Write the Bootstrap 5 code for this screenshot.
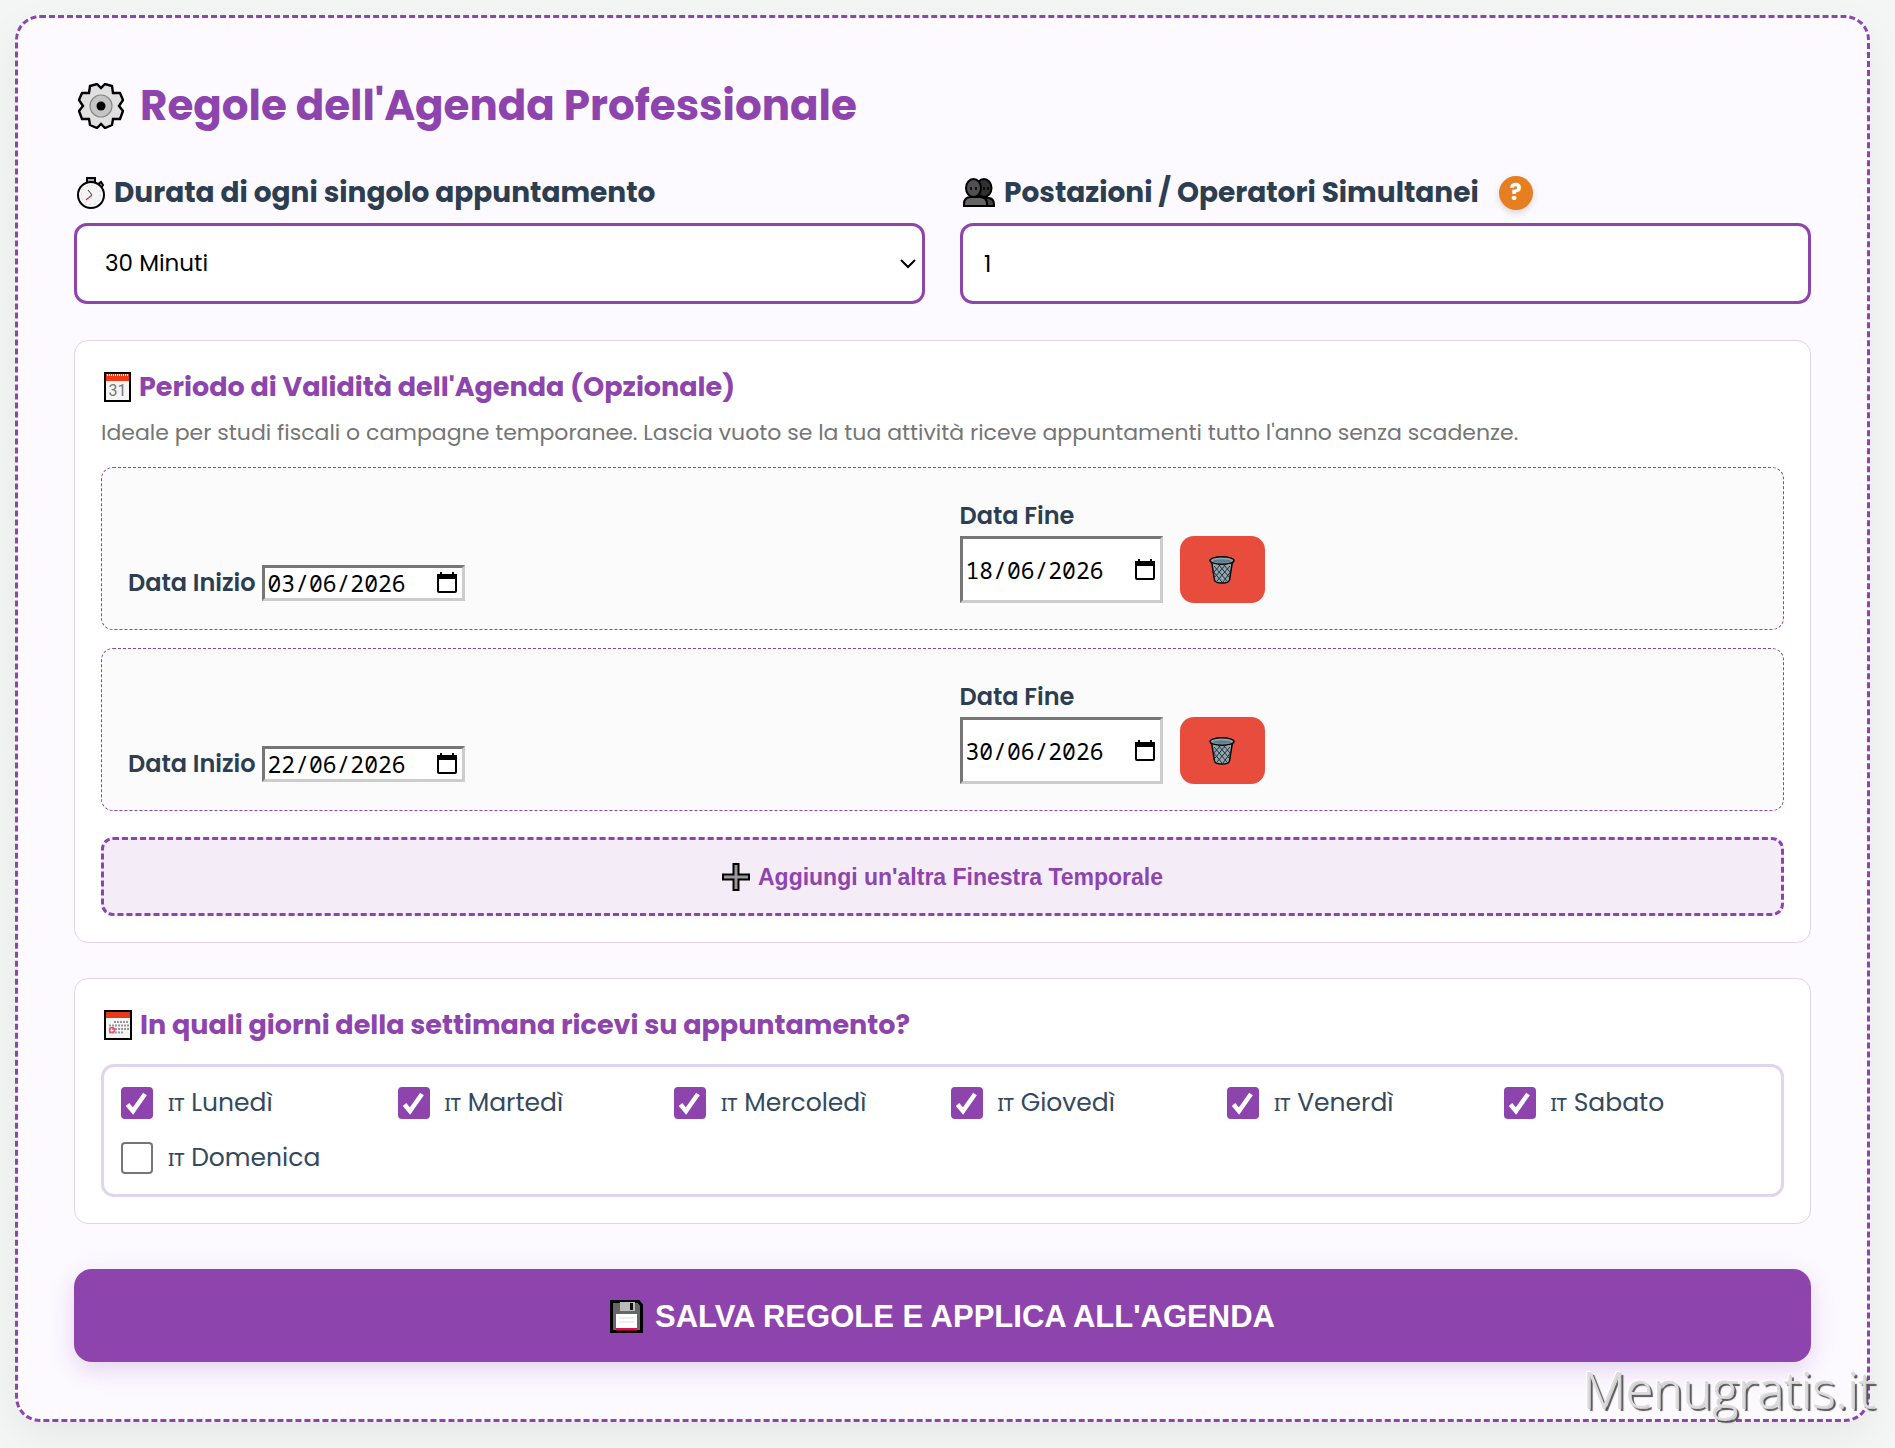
<!DOCTYPE html>
<html lang="it">
<head>
<meta charset="utf-8">
<meta name="viewport" content="width=device-width, initial-scale=1">
<title>Regole dell'Agenda Professionale</title>
<link href="https://cdn.jsdelivr.net/npm/bootstrap@5.3.0/dist/css/bootstrap.min.css" rel="stylesheet">
<style>
:root{--viola:#8e44ad;--ink:#2c3e50}
body{background:#f4f6f6;font-family:Poppins,Inter,"Open Sans",sans-serif;color:var(--ink);padding:15px 25px 26px 15px}
svg{display:block;flex:none}
.agenda{position:relative;background:#fcf9ff;border:3px dashed var(--viola);border-radius:25px;padding:56px 56px 57px;box-shadow:0 14px 40px rgba(0,0,0,.06)}
.agenda h1{font-size:42px;line-height:64px;font-weight:700;color:var(--viola);gap:16px;margin:0 0 35px;padding-left:4px}
.fields{--bs-gutter-x:35px;margin-bottom:36px}
.field-label{font-size:28px;line-height:36px;font-weight:700;gap:8px;height:40px;margin-bottom:10px;padding-left:2px}
.field-box,.field-box:focus{height:81px;border:3px solid var(--viola);border-radius:13px;background-color:#fff;color:#000;font-size:23px;padding:0 21px}
.form-select.field-box{padding-left:28px;background-image:url("data:image/svg+xml,%3Csvg xmlns='http://www.w3.org/2000/svg' viewBox='0 0 16 10'%3E%3Cpath d='M1 1l7 7 7-7' fill='none' stroke='%23000' stroke-width='2'/%3E%3C/svg%3E");background-size:16px 10px;background-position:right 6px center}
.help{width:34px;height:34px;border:0;border-radius:50%;background:#e67e22;color:#fff;font-size:22px;line-height:34px;font-weight:700;padding:0;margin-left:12px;box-shadow:0 3px 6px rgba(0,0,0,.15)}
.panel{background:#fff;border:1px solid #e0d4ea;border-radius:14px;padding:26px}
.panel+.panel{margin-top:35px}
.panel h2{font-size:27px;line-height:40px;font-weight:700;color:var(--viola);gap:8px;margin:0;padding-left:3px}
.hint{font-size:22px;line-height:32px;color:#757575;margin:10px 0 18px}
.period{background:#fbfbfc;border:1px dashed var(--viola);border-radius:12px;padding:26px;height:163px;margin-bottom:18px}
.period>.row{--bs-gutter-x:34px}
.date-label{font-size:24px;line-height:36px;font-weight:600}
.date-label.above{line-height:40px}
.start{gap:6px;padding-bottom:2px}
.date-field{width:203px;height:36px}
.date-field.tall{height:67px}
.date-box{width:100%;height:100%;border:3px solid;border-color:#767676 #ccc #ccc #767676;border-radius:0;background:#fff;color:#000;font:23px/28px Consolas,"Noto Sans Mono","DejaVu Sans Mono",monospace;padding:0 3px}
.picker{position:absolute;right:8px;top:0;bottom:0;border:0;background:none;padding:0;display:flex;align-items:center}
.trash{width:85px;height:67px;border:0;border-radius:14px;background:#e74c3c}
.dates{gap:17px}
.add{height:79px;border:3px dashed var(--viola);border-radius:12px;background:#f4ecf7;color:var(--viola);font:700 23px/30px "Liberation Sans",Arial,sans-serif;gap:8px;margin-top:26px}
.days{border:3px solid #e0d4ee;border-radius:13px;padding:15px 17px 16px;display:grid;grid-template-columns:repeat(6,1fr);gap:14px 16px;margin-top:19px}
.day{font-size:25px;line-height:41px;color:#34495e;gap:15px}
.day .form-check-input{width:32px;height:32px;margin:0;border:2px solid #767676;border-radius:4px;flex:none}
.day .form-check-input:checked{background-color:var(--viola);border-color:var(--viola);background-image:url("data:image/svg+xml,%3Csvg xmlns='http://www.w3.org/2000/svg' viewBox='0 0 28 28'%3E%3Cpath d='M4.500 15.500l5.500 6.500L22 5' fill='none' stroke='%23fff' stroke-width='4.500'/%3E%3C/svg%3E")}
.day small{font:500 18px/30px "Noto Sans",sans-serif}
.save{height:93px;border:0;border-radius:18px;background:var(--viola);color:#fff;font:700 31px/40px "Liberation Sans",Arial,sans-serif;gap:12px;margin-top:45px;padding:2px 0 0;box-shadow:0 8px 24px rgba(142,68,173,.2)}
.watermark{position:absolute;right:-8px;bottom:-5px;font:300 50px/70px "Open Sans",sans-serif;color:#dcdcdc;text-shadow:1px 1px 0 #ccc,3px 3px 1px #555,-1px -1px 0 #fff;pointer-events:none}
</style>
<script src="https://cdn.jsdelivr.net/npm/bootstrap@5.3.0/dist/js/bootstrap.bundle.min.js"></script>
</head>
<body>
<svg class="d-none" xmlns="http://www.w3.org/2000/svg">
  <symbol id="calendar" viewBox="0 0 20 22"><rect x="1" y="3" width="18" height="17" rx="1" fill="none" stroke="#000" stroke-width="2"/><path d="M0 2h20v5H0zM3 0h2v4H3zM15 0h2v4h-2z"/></symbol>
  <symbol id="bin" viewBox="0 0 26 28"><path d="M2.500 5l3 19q.5 3 7.500 3t7.500-3l3-19z" fill="#90a4ae" stroke="#000" stroke-width="1.500"/><path d="M5 10l13 15M9 8l11 13M14 8l7 8M4 15l9 11M21 10L8 25M17 8L6 21M12 8l-7 8M22 15l-8 11" stroke="#263238" stroke-width="1"/><ellipse cx="13" cy="4.500" rx="12" ry="3.700" fill="#90a4ae" stroke="#000" stroke-width="1.500"/><ellipse cx="13" cy="5" rx="9" ry="1.800" fill="#607d8b"/></symbol>
</svg>
<main class="agenda">
  <h1 class="d-flex align-items-center">
    <svg width="46" height="46" viewBox="0 0 46 46"><path d="M12 3l7-2 4 4 4-4 7 2 1 7h7l3 7-4 6 4 5-3 8h-7l-1 6-7 3-4-4-4 4-7-3-1-6H4l-3-8 4-5-4-6 3-7h7z" fill="#e0e0e0" stroke="#000" stroke-width="2.400"/><circle cx="23" cy="23" r="11" fill="#c4c4c4" stroke="#888" stroke-width="1.200"/><circle cx="23" cy="23" r="4.500"/></svg>
    <span>Regole dell'Agenda Professionale</span>
  </h1>
  <form>
    <div class="row fields">
      <div class="col-6">
        <label class="field-label d-flex align-items-center" for="durata">
          <svg width="30" height="34" viewBox="0 0 30 34"><path d="M11 6V2h8v4M22 8l3-2 2 3-2 3" fill="#aaa" stroke="#000" stroke-width="2"/><circle cx="15" cy="19" r="13" fill="#f5f5f5" stroke="#000" stroke-width="2"/><circle cx="15" cy="19" r="9.500" fill="none" stroke="#bbb" stroke-dasharray="1 4"/><path d="M12 14l4 5" stroke="#555" stroke-width="1.200"/><path d="M16 19l-6 5" stroke="#e0284f" stroke-width="1.200"/></svg>
          <span>Durata di ogni singolo appuntamento</span>
        </label>
        <select class="form-select field-box" id="durata"><option>30 Minuti</option></select>
      </div>
      <div class="col-6">
        <div class="field-label d-flex align-items-center">
          <svg width="34" height="30" viewBox="0 0 34 30"><path d="M17 28V20h10q5 1 5 6v2z" fill="#444" stroke="#000" stroke-width="2"/><ellipse cx="22" cy="10" rx="7.500" ry="9" fill="#303030" stroke="#000" stroke-width="2"/><path d="M2 28v-2q0-7 7-7h9q7 0 7 7v2z" fill="#666" stroke="#000" stroke-width="2"/><ellipse cx="11.500" cy="10" rx="7.500" ry="9" fill="#505050" stroke="#000" stroke-width="2"/><path d="M9 9v3M14 9v3M22 9v3M26 9v3" stroke="#000" stroke-width="1.500"/></svg>
          <label for="posti">Postazioni / Operatori Simultanei</label>
          <button type="button" class="help" aria-label="Aiuto">?</button>
        </div>
        <input class="form-control field-box" id="posti" type="text" inputmode="numeric" value="1">
      </div>
    </div>

    <section class="panel">
      <h2 class="d-flex align-items-center">
        <svg width="27" height="30" viewBox="0 0 27 30"><path d="M1 1h25v28H1z" fill="#f5f5f5" stroke="#000" stroke-width="2"/><path d="M2 2h23v7H2z" fill="#f03a17"/><path d="M3 3h21" stroke="#fff" stroke-width="2" stroke-dasharray="1 1"/><text x="13.500" y="24" text-anchor="middle" font-family="Roboto" font-weight="400" font-size="16" fill="#777">31</text></svg>
        <span>Periodo di Validità dell'Agenda (Opzionale)</span>
      </h2>
      <p class="hint">Ideale per studi fiscali o campagne temporanee. Lascia vuoto se la tua attività riceve appuntamenti tutto l'anno senza scadenze.</p>

      <div class="period">
        <div class="row align-items-end h-100">
          <div class="start col-6 d-flex align-items-center">
            <label class="date-label" for="inizio1">Data Inizio</label>
            <div class="date-field position-relative"><input class="date-box" type="text" inputmode="numeric" id="inizio1" value="03/06/2026"><button type="button" class="picker" aria-label="Apri calendario"><svg width="20" height="22"><use href="#calendar"/></svg></button></div>
          </div>
          <div class="col-6">
            <label class="date-label above d-block" for="fine1">Data Fine</label>
            <div class="dates d-flex">
              <div class="date-field tall position-relative"><input class="date-box" type="text" inputmode="numeric" id="fine1" value="18/06/2026"><button type="button" class="picker" aria-label="Apri calendario"><svg width="20" height="22"><use href="#calendar"/></svg></button></div>
              <button type="button" class="trash d-flex align-items-center justify-content-center" aria-label="Elimina"><svg width="26" height="28"><use href="#bin"/></svg></button>
            </div>
          </div>
        </div>
      </div>
      <div class="period">
        <div class="row align-items-end h-100">
          <div class="start col-6 d-flex align-items-center">
            <label class="date-label" for="inizio2">Data Inizio</label>
            <div class="date-field position-relative"><input class="date-box" type="text" inputmode="numeric" id="inizio2" value="22/06/2026"><button type="button" class="picker" aria-label="Apri calendario"><svg width="20" height="22"><use href="#calendar"/></svg></button></div>
          </div>
          <div class="col-6">
            <label class="date-label above d-block" for="fine2">Data Fine</label>
            <div class="dates d-flex">
              <div class="date-field tall position-relative"><input class="date-box" type="text" inputmode="numeric" id="fine2" value="30/06/2026"><button type="button" class="picker" aria-label="Apri calendario"><svg width="20" height="22"><use href="#calendar"/></svg></button></div>
              <button type="button" class="trash d-flex align-items-center justify-content-center" aria-label="Elimina"><svg width="26" height="28"><use href="#bin"/></svg></button>
            </div>
          </div>
        </div>
      </div>
      <button type="button" class="add w-100 d-flex align-items-center justify-content-center">
        <svg width="28" height="28" viewBox="0 0 28 28"><path d="M11.500 1h5v10.500H27v5H16.500V27h-5V16.500H1v-5h10.500z" fill="#999" stroke="#000" stroke-width="2"/></svg>
        <span>Aggiungi un'altra Finestra Temporale</span>
      </button>
    </section>

    <section class="panel">
      <h2 class="d-flex align-items-center">
        <svg width="28" height="30" viewBox="0 0 28 30"><path d="M1 1h26v28H1z" fill="#f5f5f5" stroke="#000" stroke-width="2"/><path d="M2 2h24v6H2z" fill="#e53a17"/><path d="M10 12h15M5 15.500h20M5 19h20M5 22.500h15" stroke="#999" stroke-width="2" stroke-dasharray="2 1"/><circle cx="8" cy="20" r="2.500" fill="none" stroke="#f0506a" stroke-width="1.500"/></svg>
        <span>In quali giorni della settimana ricevi su appuntamento?</span>
      </h2>
      <div class="days">
        <label class="day d-flex align-items-center"><input class="form-check-input" type="checkbox" checked><span><small>IT</small> Lunedì</span></label>
        <label class="day d-flex align-items-center"><input class="form-check-input" type="checkbox" checked><span><small>IT</small> Martedì</span></label>
        <label class="day d-flex align-items-center"><input class="form-check-input" type="checkbox" checked><span><small>IT</small> Mercoledì</span></label>
        <label class="day d-flex align-items-center"><input class="form-check-input" type="checkbox" checked><span><small>IT</small> Giovedì</span></label>
        <label class="day d-flex align-items-center"><input class="form-check-input" type="checkbox" checked><span><small>IT</small> Venerdì</span></label>
        <label class="day d-flex align-items-center"><input class="form-check-input" type="checkbox" checked><span><small>IT</small> Sabato</span></label>
        <label class="day d-flex align-items-center"><input class="form-check-input" type="checkbox"><span><small>IT</small> Domenica</span></label>
      </div>
    </section>

    <button type="submit" class="save w-100 d-flex align-items-center justify-content-center">
      <svg width="33" height="33" viewBox="0 0 33 33"><path d="M1.500 1.500h27l3 3.500v26.500h-30z" fill="#666" stroke="#000" stroke-width="3"/><path d="M10 2h15v9H10z" fill="#bbb"/><path d="M20 3h3v7h-3z" fill="#111"/><path d="M6 14h21v16H6z" fill="#fff"/><path d="M6 28h21v2.500H6z" fill="#e0104f"/><path d="M9 18h15M9 22h15" stroke="#ddd"/></svg>
      <span>SALVA REGOLE E APPLICA ALL'AGENDA</span>
    </button>
  </form>
  <div class="watermark">Menugratis.it</div>
</main>
</body>
</html>
